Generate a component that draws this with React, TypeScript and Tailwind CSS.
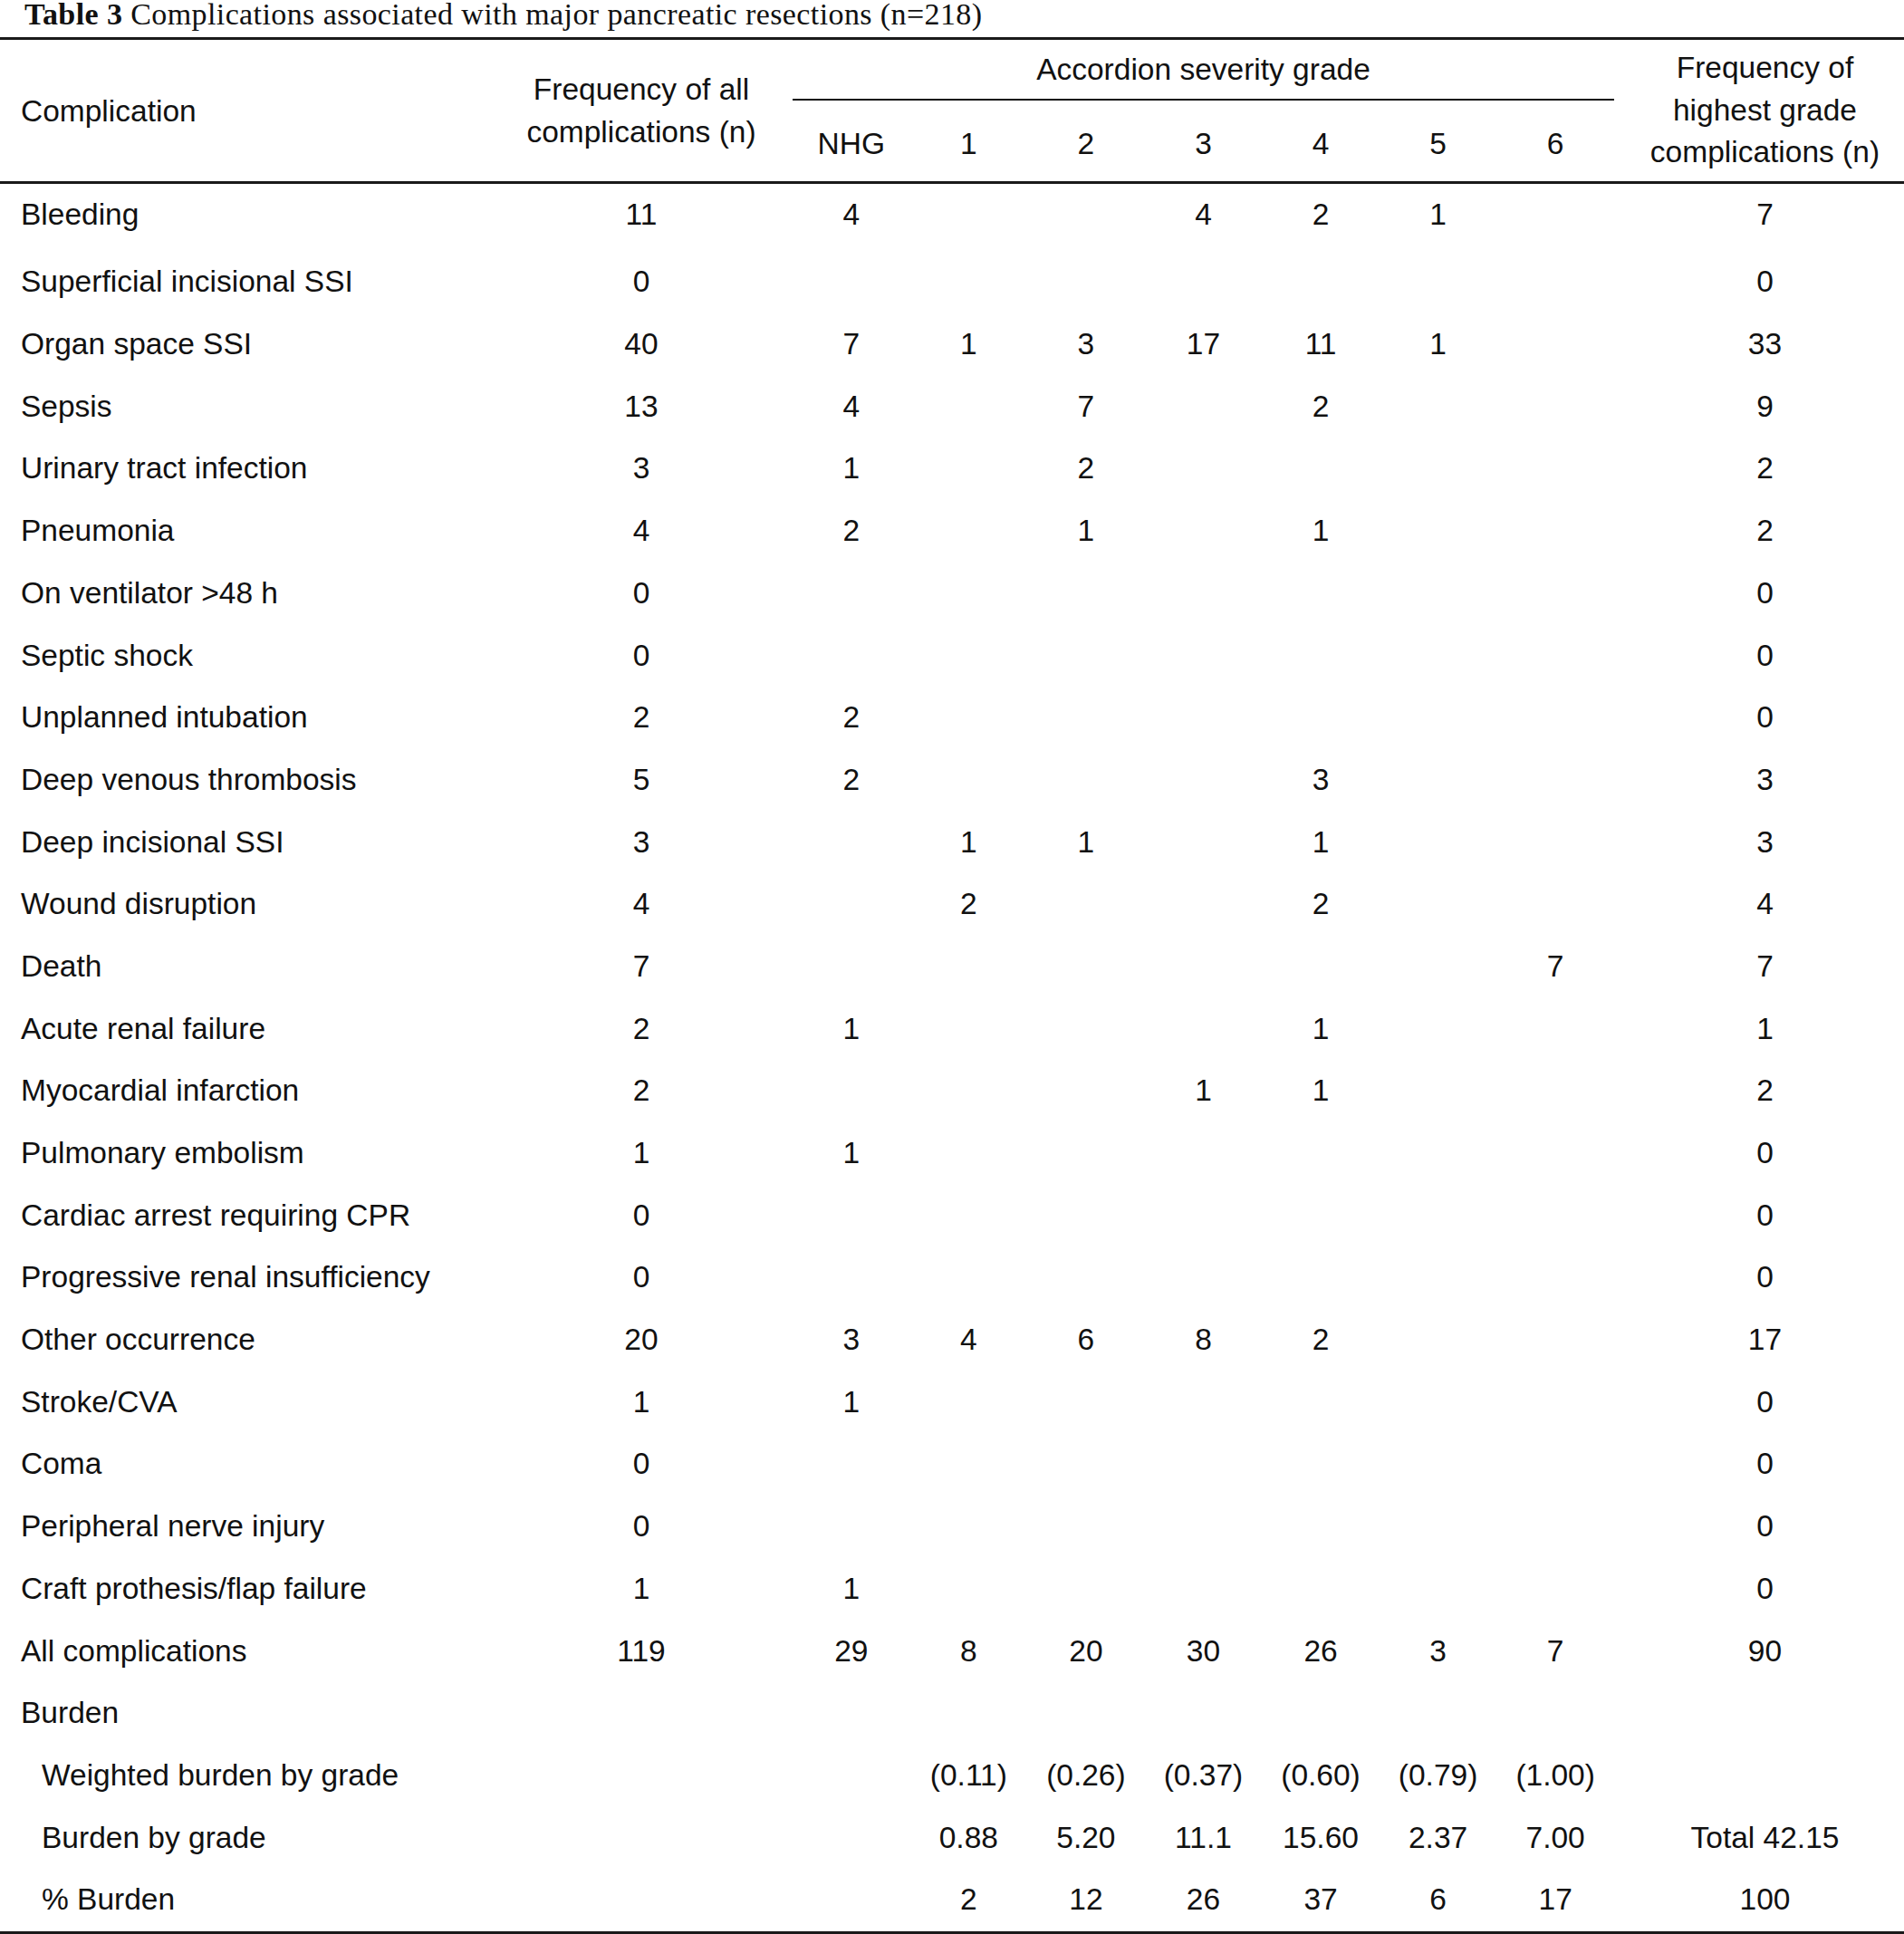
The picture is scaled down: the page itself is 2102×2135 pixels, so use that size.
import React from "react";

type Row = { label: string; indent?: boolean; cells: string[] };

const rows: Row[] = [
  { label: "Bleeding", cells: ["11", "4", "", "", "4", "2", "1", "", "7"] },
  { label: "Superficial incisional SSI", cells: ["0", "", "", "", "", "", "", "", "0"] },
  { label: "Organ space SSI", cells: ["40", "7", "1", "3", "17", "11", "1", "", "33"] },
  { label: "Sepsis", cells: ["13", "4", "", "7", "", "2", "", "", "9"] },
  { label: "Urinary tract infection", cells: ["3", "1", "", "2", "", "", "", "", "2"] },
  { label: "Pneumonia", cells: ["4", "2", "", "1", "", "1", "", "", "2"] },
  { label: "On ventilator >48 h", cells: ["0", "", "", "", "", "", "", "", "0"] },
  { label: "Septic shock", cells: ["0", "", "", "", "", "", "", "", "0"] },
  { label: "Unplanned intubation", cells: ["2", "2", "", "", "", "", "", "", "0"] },
  { label: "Deep venous thrombosis", cells: ["5", "2", "", "", "", "3", "", "", "3"] },
  { label: "Deep incisional SSI", cells: ["3", "", "1", "1", "", "1", "", "", "3"] },
  { label: "Wound disruption", cells: ["4", "", "2", "", "", "2", "", "", "4"] },
  { label: "Death", cells: ["7", "", "", "", "", "", "", "7", "7"] },
  { label: "Acute renal failure", cells: ["2", "1", "", "", "", "1", "", "", "1"] },
  { label: "Myocardial infarction", cells: ["2", "", "", "", "1", "1", "", "", "2"] },
  { label: "Pulmonary embolism", cells: ["1", "1", "", "", "", "", "", "", "0"] },
  { label: "Cardiac arrest requiring CPR", cells: ["0", "", "", "", "", "", "", "", "0"] },
  { label: "Progressive renal insufficiency", cells: ["0", "", "", "", "", "", "", "", "0"] },
  { label: "Other occurrence", cells: ["20", "3", "4", "6", "8", "2", "", "", "17"] },
  { label: "Stroke/CVA", cells: ["1", "1", "", "", "", "", "", "", "0"] },
  { label: "Coma", cells: ["0", "", "", "", "", "", "", "", "0"] },
  { label: "Peripheral nerve injury", cells: ["0", "", "", "", "", "", "", "", "0"] },
  { label: "Craft prothesis/flap failure", cells: ["1", "1", "", "", "", "", "", "", "0"] },
  { label: "All complications", cells: ["119", "29", "8", "20", "30", "26", "3", "7", "90"] },
  { label: "Burden", cells: ["", "", "", "", "", "", "", "", ""] },
  {
    label: "Weighted burden by grade",
    indent: true,
    cells: ["", "", "(0.11)", "(0.26)", "(0.37)", "(0.60)", "(0.79)", "(1.00)", ""],
  },
  {
    label: "Burden by grade",
    indent: true,
    cells: ["", "", "0.88", "5.20", "11.1", "15.60", "2.37", "7.00", "Total 42.15"],
  },
  {
    label: "% Burden",
    indent: true,
    cells: ["", "", "2", "12", "26", "37", "6", "17", "100"],
  },
];

const grid = "grid grid-cols-[541px_334px_repeat(7,129.57px)_1fr]";

export default function App() {
  return (
    <div className="w-[2102px] bg-white text-[#111] font-['Liberation_Sans',Arial,sans-serif] text-[33.5px]">
      <div className="h-[41px] pl-[27px] leading-[31px] text-[34px] tracking-[0.4px] font-['Liberation_Serif','Times_New_Roman',serif] whitespace-nowrap">
        <span className="font-bold">Table 3</span> Complications associated with major pancreatic resections (n=218)
      </div>
      <div className="h-[3px] bg-[#1a1a1a]" />
      <div className={`${grid} h-[156px]`}>
        <div className="flex items-center pl-[23px] leading-[47px]">Complication</div>
        <div className="flex items-center justify-center text-center leading-[47px]">
          Frequency of all
          <br />
          complications (n)
        </div>
        <div className="col-span-7 flex flex-col">
          <div className="h-[65px] pt-[8.5px] text-center leading-[47px]">Accordion severity grade</div>
          <div className="h-[2px] bg-[#111]" />
          <div className="grid flex-1 grid-cols-7">
            {["NHG", "1", "2", "3", "4", "5", "6"].map((g) => (
              <div key={g} className="pt-[23.5px] text-center leading-[47px]">
                {g}
              </div>
            ))}
          </div>
        </div>
        <div className="flex items-center justify-center pl-[13px] text-center leading-[46.5px]">
          Frequency of
          <br />
          highest grade
          <br />
          complications (n)
        </div>
      </div>
      <div className="h-[3px] bg-[#1a1a1a]" />
      {rows.map((r, i) => (
        <div key={r.label} className={`${grid} ${i === 0 ? "h-[74.4px]" : "h-[68.7px]"} leading-[68.7px]`}>
          <div className={`whitespace-nowrap ${r.indent ? "pl-[46px]" : "pl-[23px]"}`}>{r.label}</div>
          {r.cells.map((c, j) => (
            <div key={j} className={`text-center whitespace-nowrap ${j === 8 ? "pl-[13px]" : ""}`}>
              {c}
            </div>
          ))}
        </div>
      ))}
      <div className="h-[3px] bg-[#1a1a1a]" />
    </div>
  );
}
